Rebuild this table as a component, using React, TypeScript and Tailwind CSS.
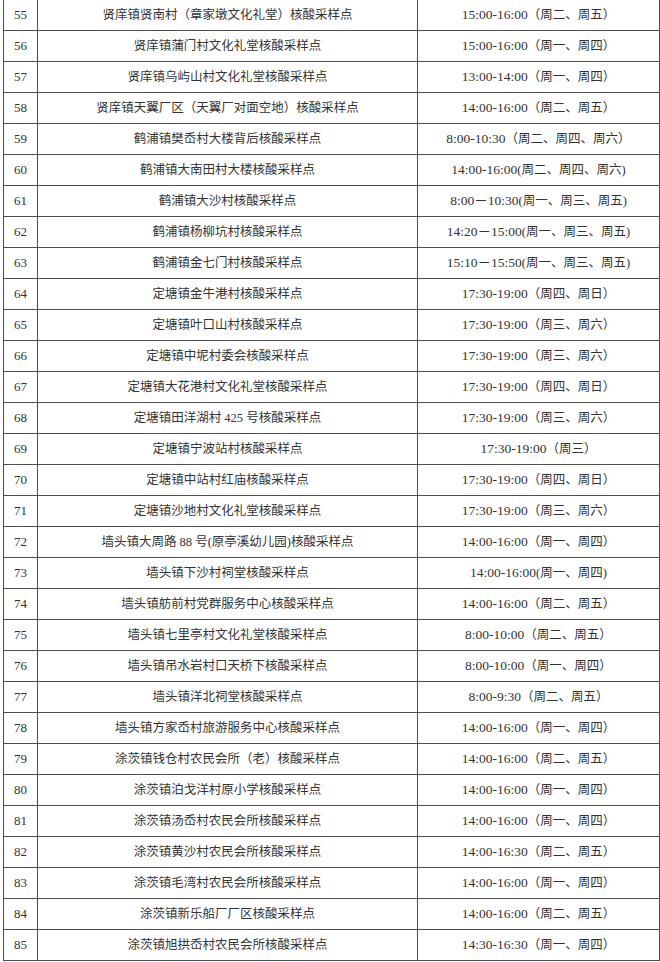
type Site = {
  no: number;
  name: string;
  time: string;
};

const sites: Site[] = [
  { no: 55, name: "贤庠镇贤南村（章家墩文化礼堂）核酸采样点", time: "15:00-16:00（周二、周五）" },
  { no: 56, name: "贤庠镇蒲门村文化礼堂核酸采样点", time: "15:00-16:00（周一、周四）" },
  { no: 57, name: "贤庠镇乌屿山村文化礼堂核酸采样点", time: "13:00-14:00（周一、周四）" },
  { no: 58, name: "贤庠镇天翼厂区（天翼厂对面空地）核酸采样点", time: "14:00-16:00（周二、周五）" },
  { no: 59, name: "鹤浦镇樊岙村大楼背后核酸采样点", time: "8:00-10:30（周二、周四、周六）" },
  { no: 60, name: "鹤浦镇大南田村大楼核酸采样点", time: "14:00-16:00(周二、周四、周六)" },
  { no: 61, name: "鹤浦镇大沙村核酸采样点", time: "8:00－10:30(周一、周三、周五)" },
  { no: 62, name: "鹤浦镇杨柳坑村核酸采样点", time: "14:20－15:00(周一、周三、周五)" },
  { no: 63, name: "鹤浦镇金七门村核酸采样点", time: "15:10－15:50(周一、周三、周五)" },
  { no: 64, name: "定塘镇金牛港村核酸采样点", time: "17:30-19:00（周四、周日）" },
  { no: 65, name: "定塘镇叶口山村核酸采样点", time: "17:30-19:00（周三、周六）" },
  { no: 66, name: "定塘镇中坭村委会核酸采样点", time: "17:30-19:00（周三、周六）" },
  { no: 67, name: "定塘镇大花港村文化礼堂核酸采样点", time: "17:30-19:00（周四、周日）" },
  { no: 68, name: "定塘镇田洋湖村 425 号核酸采样点", time: "17:30-19:00（周三、周六）" },
  { no: 69, name: "定塘镇宁波站村核酸采样点", time: "17:30-19:00（周三）" },
  { no: 70, name: "定塘镇中站村红庙核酸采样点", time: "17:30-19:00（周四、周日）" },
  { no: 71, name: "定塘镇沙地村文化礼堂核酸采样点", time: "17:30-19:00（周三、周六）" },
  { no: 72, name: "墙头镇大周路 88 号(原亭溪幼儿园)核酸采样点", time: "14:00-16:00（周一、周四）" },
  { no: 73, name: "墙头镇下沙村祠堂核酸采样点", time: "14:00-16:00(周一、周四)" },
  { no: 74, name: "墙头镇舫前村党群服务中心核酸采样点", time: "14:00-16:00（周二、周五）" },
  { no: 75, name: "墙头镇七里亭村文化礼堂核酸采样点", time: "8:00-10:00（周二、周五）" },
  { no: 76, name: "墙头镇吊水岩村口天桥下核酸采样点", time: "8:00-10:00（周一、周四）" },
  { no: 77, name: "墙头镇洋北祠堂核酸采样点", time: "8:00-9:30（周二、周五）" },
  { no: 78, name: "墙头镇方家岙村旅游服务中心核酸采样点", time: "14:00-16:00（周一、周四）" },
  { no: 79, name: "涂茨镇钱仓村农民会所（老）核酸采样点", time: "14:00-16:00（周二、周五）" },
  { no: 80, name: "涂茨镇泊戈洋村原小学核酸采样点", time: "14:00-16:00（周一、周四）" },
  { no: 81, name: "涂茨镇汤岙村农民会所核酸采样点", time: "14:00-16:00（周一、周四）" },
  { no: 82, name: "涂茨镇黄沙村农民会所核酸采样点", time: "14:00-16:30（周二、周五）" },
  { no: 83, name: "涂茨镇毛湾村农民会所核酸采样点", time: "14:00-16:00（周一、周四）" },
  { no: 84, name: "涂茨镇新乐船厂厂区核酸采样点", time: "14:00-16:00（周二、周五）" },
  { no: 85, name: "涂茨镇旭拱岙村农民会所核酸采样点", time: "14:30-16:30（周一、周四）" },
];

// split "15:00-16:00（周二、周五）" into the clock part and the weekday part
function splitTime(t: string) {
  const i = t.search(/[(（]/);
  return i < 0 ? [t, ""] : [t.slice(0, i), t.slice(i)];
}

export default function App() {
  return (
    <div className="min-h-screen bg-white">
      {/* table of sampling points, continued from previous page */}
      <div
        className="ml-[3px] w-[657px] border-x border-[#4d4d4d] text-[12.5px] text-[#333]"
        style={{ fontFamily: '"Liberation Serif", "Noto Sans CJK SC", serif' }}
      >
        {sites.map((s) => {
          const [clock, days] = splitTime(s.time);
          return (
            <div
              key={s.no}
              className="grid h-[31px] grid-cols-[34px_380px_241px] border-b border-[#4d4d4d]"
            >
              <div className="flex items-center justify-center border-r border-[#4d4d4d] text-[13px]">
                {s.no}
              </div>
              <div className="flex items-center justify-center border-r border-[#4d4d4d] whitespace-nowrap">
                {s.name}
              </div>
              <div className="flex items-center justify-center whitespace-nowrap">
                <span className="text-[13.5px]">{clock}</span>
                <span>{days}</span>
              </div>
            </div>
          );
        })}
      </div>
    </div>
  );
}
